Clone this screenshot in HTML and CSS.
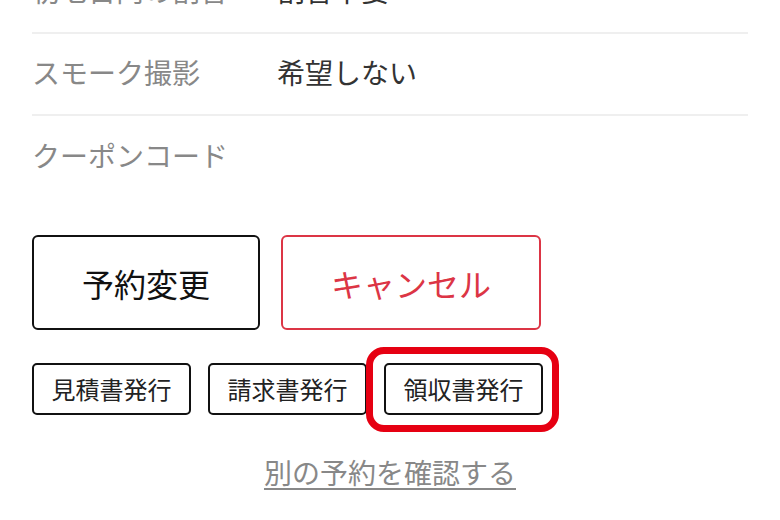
FILE: index.html
```html
<!DOCTYPE html>
<html lang="ja">
<head>
<meta charset="utf-8">
<title>予約詳細</title>
<link rel="stylesheet" href="styles.css">
</head>
<body>
<div class="page">
  <dl class="details">
    <div class="row">
      <dt class="label">初七日内の割合</dt>
      <dd class="value">割合不要</dd>
    </div>
    <div class="row">
      <dt class="label">スモーク撮影</dt>
      <dd class="value">希望しない</dd>
    </div>
    <div class="row row-last">
      <dt class="label">クーポンコード</dt>
      <dd class="value"></dd>
    </div>
  </dl>
  <div class="main-actions">
    <button class="btn-large btn-change">予約変更</button>
    <button class="btn-large btn-cancel">キャンセル</button>
  </div>
  <div class="doc-actions">
    <button class="btn-small">見積書発行</button>
    <button class="btn-small">請求書発行</button>
    <span class="highlight-wrap">
      <button class="btn-small">領収書発行</button>
      <span class="highlight-ring"></span>
    </span>
  </div>
  <div class="link-row">
    <a class="other-link" href="#">別の予約を確認する</a>
  </div>
</div>
</body>
</html>
```
FILE: styles.css
```css
* { box-sizing: border-box; }
html, body {
  margin: 0;
  padding: 0;
  background: #fff;
}
body {
  font-family: "Noto Sans CJK JP", "Noto Sans", sans-serif;
  color: #333;
}
.page {
  padding: 0 32px;
  margin-top: -48px;
}
.details {
  margin: 0;
}
.row {
  display: flex;
  align-items: center;
  height: 82px;
  padding: 18px 0 22px;
  border-bottom: 2px solid #efefef;
}
.row-last {
  border-bottom: none;
}
.label {
  width: 245px;
  flex: none;
  margin: 0;
  font-size: 28px;
  line-height: 40px;
  color: #888;
}
.value {
  margin: 0;
  font-size: 28px;
  line-height: 40px;
  color: #333;
}
.main-actions {
  display: flex;
  gap: 21px;
  margin-top: 37px;
}
.btn-large {
  height: 95px;
  padding: 0 48px;
  font-family: inherit;
  font-size: 32px;
  line-height: 40px;
  background: #fff;
  border-radius: 6px;
  cursor: pointer;
}
.btn-change {
  border: 2px solid #111;
  color: #111;
}
.btn-cancel {
  border: 2px solid #dc3545;
  color: #dc3545;
}
.doc-actions {
  display: flex;
  align-items: center;
  gap: 17px;
  margin-top: 33px;
}
.btn-small {
  width: 159px;
  height: 52px;
  padding: 0;
  font-family: inherit;
  font-size: 24px;
  line-height: 30px;
  color: #222;
  background: #fff;
  border: 2px solid #111;
  border-radius: 5px;
  cursor: pointer;
}
.highlight-wrap {
  position: relative;
  display: inline-flex;
}
.highlight-ring {
  position: absolute;
  left: -18px;
  right: -16px;
  top: -16px;
  bottom: -17px;
  border: 7px solid #e60012;
  border-radius: 18px;
  pointer-events: none;
}
.link-row {
  display: flex;
  justify-content: center;
  margin-top: 37px;
}
.other-link {
  font-size: 28px;
  line-height: 40px;
  color: #888;
  text-decoration: underline;
  text-decoration-thickness: 2px;
  text-underline-offset: 4px;
}
```
